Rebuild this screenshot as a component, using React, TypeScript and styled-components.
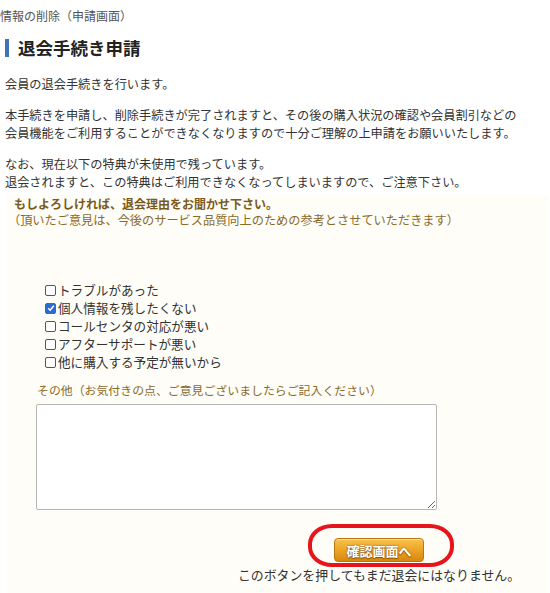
import React from "react";
import styled, { createGlobalStyle } from "styled-components";

const GlobalStyle = createGlobalStyle`
  html, body { margin: 0; padding: 0; background: #ffffff; }
  body {
    font-family: "Noto Sans CJK JP", "Noto Sans", sans-serif;
    color: #333333;
  }
`;

const Page = styled.div`
  width: 550px;
  height: 593px;
  position: relative;
  overflow: hidden;
  display: flex;
  flex-direction: column;
`;

const Breadcrumb = styled.div`
  font-size: 12px;
  line-height: 18px;
  color: #555555;
  padding-top: 7px;
`;

const Heading = styled.h1`
  margin: 12px 0 0 5px;
  display: flex;
  align-items: center;
  gap: 9px;
  font-size: 17.5px;
  line-height: 22px;
  font-weight: 700;
  color: #222222;
  &::before {
    content: "";
    display: block;
    width: 4px;
    height: 18px;
    background: #3f73b6;
  }
`;

const Body = styled.div`
  margin: 16px 0 0 5px;
  font-size: 12.2px;
  line-height: 18px;
  color: #333333;
`;

const Para = styled.p`
  margin: 0 0 13px 0;
  white-space: nowrap;
  &:last-child { margin-bottom: 0; }
`;

const Panel = styled.div`
  margin: 4px 2px 0 6px;
  background: #fefdf7;
  flex: 1;
  padding: 1px 0 0 0;
  display: flex;
  flex-direction: column;
`;

const PanelTitle = styled.div`
  font-size: 12px;
  line-height: 16px;
  font-weight: 700;
  color: #7a5a1a;
  padding-left: 8px;
`;

const PanelNote = styled.div`
  font-size: 12.2px;
  line-height: 16px;
  color: #8a6a2a;
  padding-left: 2px;
`;

const ReasonList = styled.div`
  margin: 53px 0 0 39px;
  display: flex;
  flex-direction: column;
`;

const ReasonRow = styled.label`
  display: flex;
  align-items: center;
  font-size: 12.6px;
  line-height: 18px;
  color: #333333;
`;

const Box = styled.span<{ $checked?: boolean }>`
  width: 9px;
  height: 9px;
  margin: 0 2px 0 0;
  border: 1px solid ${(p) => (p.$checked ? "#2a6bd1" : "#555555")};
  border-radius: 2px;
  background: ${(p) => (p.$checked ? "#2a6bd1" : "#ffffff")};
  display: flex;
  align-items: center;
  justify-content: center;
  flex-shrink: 0;
`;

const OtherLabel = styled.div`
  margin: 10px 0 0 31px;
  font-size: 11.9px;
  line-height: 18px;
  color: #8a6a2a;
`;

const TextArea = styled.textarea`
  margin: 5px 0 0 30px;
  width: 401px;
  height: 106px;
  box-sizing: border-box;
  border: 1px solid #b5b5b5;
  border-radius: 2px;
  background: #ffffff;
  font-family: inherit;
  resize: both;
  outline: none;
`;

const ButtonArea = styled.div`
  margin-top: 28px;
  display: flex;
  flex-direction: column;
  align-items: center;
  padding-left: 204px;
`;

const ConfirmButton = styled.button`
  position: relative;
  width: 90px;
  height: 24px;
  padding: 0;
  border: 1px solid #b8760c;
  border-radius: 4px;
  background: linear-gradient(#f7c24e 0%, #eea72a 45%, #d8880c 100%);
  color: #ffffff;
  font-family: inherit;
  font-size: 13px;
  font-weight: 700;
  text-shadow: 0 0 2px #8a5200, 0 1px 1px #8a5200;
  box-shadow: inset 0 1px 0 rgba(255, 255, 255, 0.5);
  cursor: pointer;
`;

const Highlight = styled.span`
  position: absolute;
  left: -27px;
  top: -15px;
  width: 146px;
  height: 43px;
  box-sizing: border-box;
  border: 4px solid #e8141c;
  border-radius: 24px / 20px;
  pointer-events: none;
`;

const Notice = styled.div`
  margin-top: 5px;
  font-size: 12.9px;
  line-height: 16px;
  color: #333333;
`;

const reasons = [
  { label: "トラブルがあった", checked: false },
  { label: "個人情報を残したくない", checked: true },
  { label: "コールセンタの対応が悪い", checked: false },
  { label: "アフターサポートが悪い", checked: false },
  { label: "他に購入する予定が無いから", checked: false },
];

export default function App() {
  return (
    <>
      <GlobalStyle />
      <Page>
        <Breadcrumb>情報の削除（申請画面）</Breadcrumb>
        <Heading>退会手続き申請</Heading>
        <Body>
          <Para>会員の退会手続きを行います。</Para>
          <Para>
            本手続きを申請し、削除手続きが完了されますと、その後の購入状況の確認や会員割引などの
            <br />
            会員機能をご利用することができなくなりますので十分ご理解の上申請をお願いいたします。
          </Para>
          <Para>
            なお、現在以下の特典が未使用で残っています。
            <br />
            退会されますと、この特典はご利用できなくなってしまいますので、ご注意下さい。
          </Para>
        </Body>
        <Panel>
          <PanelTitle>もしよろしければ、退会理由をお聞かせ下さい。</PanelTitle>
          <PanelNote>（頂いたご意見は、今後のサービス品質向上のための参考とさせていただきます）</PanelNote>
          <ReasonList>
            {reasons.map((r) => (
              <ReasonRow key={r.label}>
                <Box $checked={r.checked}>
                  {r.checked && (
                    <svg width="8" height="8" viewBox="0 0 8 8">
                      <path d="M1.2 4.2 L3.2 6.2 L6.8 1.8" fill="none" stroke="#ffffff" strokeWidth="1.5" />
                    </svg>
                  )}
                </Box>
                {r.label}
              </ReasonRow>
            ))}
          </ReasonList>
          <OtherLabel>その他（お気付きの点、ご意見ございましたらご記入ください）</OtherLabel>
          <TextArea />
          <ButtonArea>
            <ConfirmButton>
              確認画面へ
              <Highlight />
            </ConfirmButton>
            <Notice>このボタンを押してもまだ退会にはなりません。</Notice>
          </ButtonArea>
        </Panel>
      </Page>
    </>
  );
}
